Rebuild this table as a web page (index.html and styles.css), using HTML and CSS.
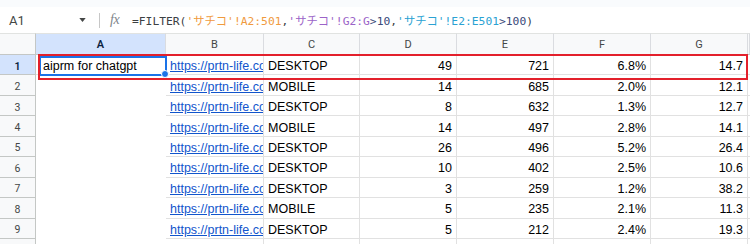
FILE: index.html
```html
<!DOCTYPE html>
<html lang="ja">
<head>
<meta charset="utf-8">
<title>Sheet</title>
<link rel="stylesheet" href="styles.css">
</head>
<body>
<div class="top"></div>
<div class="fbar">
  <div class="namebox">A1</div>
  <svg class="caret" width="8" height="5" viewBox="0 0 8 5"><path d="M0 0h8L4 5z" fill="#444746"/></svg>
  <div class="sep"></div>
  <div class="fx">fx</div>
  <div class="formula"><span class="d">=FILTER(</span><span class="r1">'サチコ'!A2:501</span><span class="d">,</span><span class="r2">'サチコ'!G2:G</span><span class="n">&gt;10</span><span class="d">,</span><span class="r3">'サチコ'!E2:E501</span><span class="n">&gt;100</span><span class="d">)</span></div>
</div>
<div class="sheet">
  <div class="corner"></div>
  <div class="ch sel">A</div><div class="ch">B</div><div class="ch">C</div><div class="ch">D</div><div class="ch">E</div><div class="ch">F</div><div class="ch">G</div><div class="ch"></div>

  <div class="rh sel">1</div><div class="c a1">aiprm for chatgpt</div><div class="c link"><span>https://prtn-life.com/</span></div><div class="c">DESKTOP</div><div class="c num">49</div><div class="c num">721</div><div class="c num">6.8%</div><div class="c num">14.7</div><div class="c"></div>

  <div class="rh">2</div><div class="ae"></div><div class="c link"><span>https://prtn-life.com/</span></div><div class="c">MOBILE</div><div class="c num">14</div><div class="c num">685</div><div class="c num">2.0%</div><div class="c num">12.1</div><div class="c"></div>

  <div class="rh">3</div><div class="ae"></div><div class="c link"><span>https://prtn-life.com/</span></div><div class="c">DESKTOP</div><div class="c num">8</div><div class="c num">632</div><div class="c num">1.3%</div><div class="c num">12.7</div><div class="c"></div>

  <div class="rh">4</div><div class="ae"></div><div class="c link"><span>https://prtn-life.com/</span></div><div class="c">MOBILE</div><div class="c num">14</div><div class="c num">497</div><div class="c num">2.8%</div><div class="c num">14.1</div><div class="c"></div>

  <div class="rh">5</div><div class="ae"></div><div class="c link"><span>https://prtn-life.com/</span></div><div class="c">DESKTOP</div><div class="c num">26</div><div class="c num">496</div><div class="c num">5.2%</div><div class="c num">26.4</div><div class="c"></div>

  <div class="rh">6</div><div class="ae"></div><div class="c link"><span>https://prtn-life.com/</span></div><div class="c">DESKTOP</div><div class="c num">10</div><div class="c num">402</div><div class="c num">2.5%</div><div class="c num">10.6</div><div class="c"></div>

  <div class="rh">7</div><div class="ae"></div><div class="c link"><span>https://prtn-life.com/</span></div><div class="c">DESKTOP</div><div class="c num">3</div><div class="c num">259</div><div class="c num">1.2%</div><div class="c num">38.2</div><div class="c"></div>

  <div class="rh">8</div><div class="ae"></div><div class="c link"><span>https://prtn-life.com/</span></div><div class="c">MOBILE</div><div class="c num">5</div><div class="c num">235</div><div class="c num">2.1%</div><div class="c num">11.3</div><div class="c"></div>

  <div class="rh">9</div><div class="ae"></div><div class="c link"><span>https://prtn-life.com/</span></div><div class="c">DESKTOP</div><div class="c num">5</div><div class="c num">212</div><div class="c num">2.4%</div><div class="c num">19.3</div><div class="c"></div>

  <div class="rh">10</div><div class="ae"></div><div class="c link"><span>https://prtn-life.com/</span></div><div class="c">MOBILE</div><div class="c num">6</div><div class="c num">199</div><div class="c num">4.5%</div><div class="c num">16.0</div><div class="c"></div>
</div>
<div class="mark"></div>
</body>
</html>
```
FILE: styles.css
```css
* { box-sizing: border-box; }
body {
  margin: 0;
  width: 750px;
  height: 244px;
  overflow: hidden;
  position: relative;
  background: #fff;
  font-family: "Liberation Sans", Arial, sans-serif;
}
.top { height: 7px; background: #f9fbfd; }
.fbar {
  height: 26px;
  display: flex;
  align-items: center;
  background: #fff;
}
.namebox {
  width: 79px;
  padding-left: 9px;
  font: 13px Roboto, sans-serif;
  color: #444746;
}
.caret { display: block; width: 7px; height: 4px; }
.sep { width: 1px; height: 15px; background: #c7c7c7; margin-left: 13px; }
.fx {
  margin-left: 10px;
  width: 22px;
  font: italic 14px "Liberation Serif", serif;
  color: #80868b;
  letter-spacing: -0.5px;
}
.formula {
  font: 11.3px "DejaVu Sans Mono", "Noto Sans CJK JP", monospace;
  color: #3c4043;
  white-space: nowrap;
}
.formula .r1 { color: #f09a3e; }
.formula .r2 { color: #9b63c8; }
.formula .r3 { color: #2aa2d3; }
.formula .n { color: #3a4a7a; }

.sheet {
  display: grid;
  grid-template-columns: 36px 130px 98px 96px 97px 97px 97px 97px 2px;
  grid-template-rows: 22px repeat(10, 20.45px);
}
.corner {
  background: #f8f9fa;
  border-top: 1px solid #e1e3e1;
  border-right: 1px solid #c4c7c5;
  border-bottom: 1px solid #c4c7c5;
}
.ch {
  background: #f8f9fa;
  border-top: 1px solid #e1e3e1;
  border-right: 1px solid #dadce0;
  border-bottom: 1px solid #c4c7c5;
  display: flex;
  align-items: center;
  justify-content: center;
  padding-top: 1px;
  font: 11px Roboto, sans-serif;
  color: #444746;
}
.ch.sel { background: #d3e3fd; color: #0b1f3f; font-weight: 600; }
.rh {
  background: #f8f9fa;
  border-right: 1px solid #c4c7c5;
  border-bottom: 1px solid #c4c7c5;
  display: flex;
  align-items: center;
  justify-content: center;
  padding-top: 3px;
  font: 10.5px Roboto, sans-serif;
  color: #444746;
}
.rh.sel { background: #d3e3fd; color: #0b1f3f; font-weight: 600; }
.c {
  border-right: 1px solid #e1e1e1;
  border-bottom: 1px solid #e1e1e1;
  display: flex;
  align-items: center;
  padding: 3px 3px 0 4px;
  font-size: 12.5px;
  color: #000;
  white-space: nowrap;
  overflow: hidden;
}
.c.num { justify-content: flex-end; padding-right: 4px; }
.c.link { color: #1155cc; text-decoration: underline; padding-left: 4px; padding-right: 0; }
.c.link span { display: block; overflow: hidden; text-overflow: clip; min-width: 0; }
.a1 { position: relative; overflow: visible; padding-left: 7px; }
.a1::after {
  content: "";
  position: absolute;
  left: 3px;
  top: 1px;
  right: -2px;
  bottom: -2px;
  border: 2px solid #1a73e8;
}
.a1::before {
  content: "";
  position: absolute;
  right: -4px;
  bottom: -4px;
  width: 6px;
  height: 6px;
  border-radius: 50%;
  background: #1a73e8;
  border: 1px solid #fff;
  z-index: 2;
}
.ae { background: #fff; }
.mark {
  position: absolute;
  left: 38px;
  top: 54px;
  width: 710px;
  height: 26px;
  border: 2px solid #e3202b;
  z-index: 3;
}
```
